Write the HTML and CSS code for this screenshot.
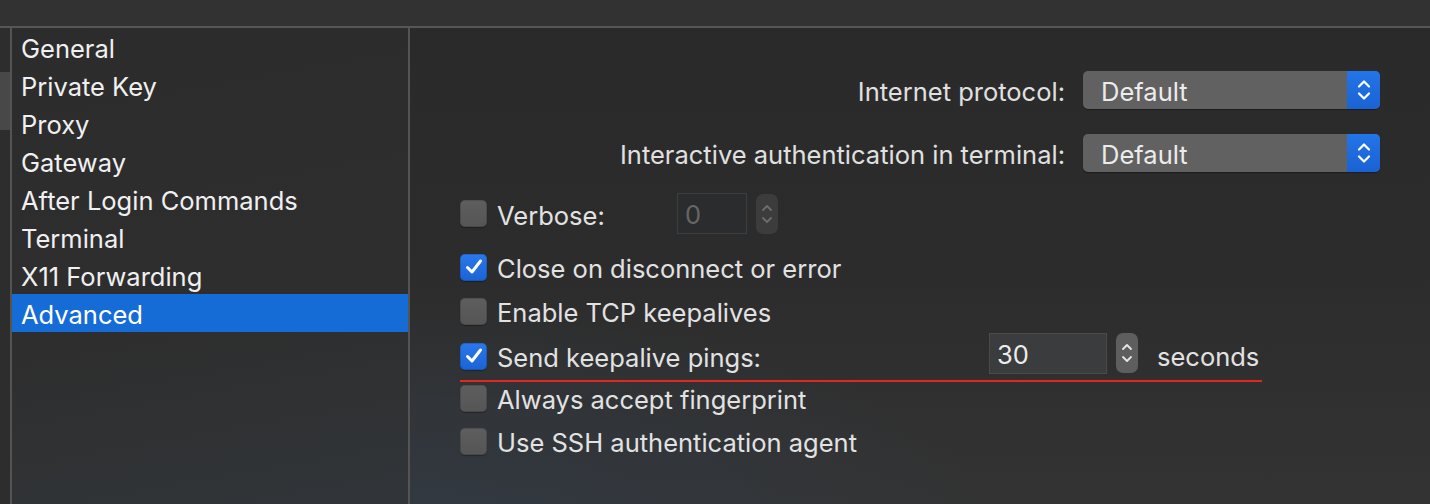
FILE: index.html
```html
<!DOCTYPE html>
<html>
<head>
<meta charset="utf-8">
<link rel="stylesheet" href="styles.css">
</head>
<body>
<div class="window">
  <div class="topbar"></div>
  <div class="content">
    <div class="gutter"><div class="thumb"></div></div>
    <ul class="sidebar">
      <li>General</li>
      <li>Private Key</li>
      <li>Proxy</li>
      <li>Gateway</li>
      <li>After Login Commands</li>
      <li>Terminal</li>
      <li>X11 Forwarding</li>
      <li class="selected">Advanced</li>
    </ul>
    <main class="main">
      <div class="popups">
        <label class="plabel">Internet protocol:</label>
        <div class="popup"><span class="pval">Default</span><span class="parrows"><svg width="16" height="24" viewBox="0 0 16 24"><path d="M3 8.5 L8 3.5 L13 8.5 M3 15.5 L8 20.5 L13 15.5" fill="none" stroke="#fff" stroke-width="2.2" stroke-linecap="round" stroke-linejoin="round"/></svg></span></div>
        <label class="plabel">Interactive authentication in terminal:</label>
        <div class="popup"><span class="pval">Default</span><span class="parrows"><svg width="16" height="24" viewBox="0 0 16 24"><path d="M3 8.5 L8 3.5 L13 8.5 M3 15.5 L8 20.5 L13 15.5" fill="none" stroke="#fff" stroke-width="2.2" stroke-linecap="round" stroke-linejoin="round"/></svg></span></div>
      </div>

      <div class="row verbose">
        <div class="check-label"><span class="cb"></span><span class="txt">Verbose:</span></div>
        <div class="field disabled">0</div>
        <div class="stepper disabled"><svg width="14" height="30" viewBox="0 0 14 30"><path d="M3 11 L7 7 L11 11 M3 19 L7 23 L11 19" fill="none" stroke="#6d6d6d" stroke-width="1.8" stroke-linecap="round" stroke-linejoin="round"/></svg></div>
      </div>

      <div class="row simple first"><span class="cb on"><svg width="22" height="22" viewBox="0 0 22 22"><path d="M4.5 11.5 L9 16 L17.5 5" fill="none" stroke="#fff" stroke-width="3" stroke-linecap="round" stroke-linejoin="round"/></svg></span><span class="txt">Close on disconnect or error</span></div>
      <div class="row simple"><span class="cb"></span><span class="txt">Enable TCP keepalives</span></div>

      <div class="row keepalive">
        <div class="check-label"><span class="cb on"><svg width="22" height="22" viewBox="0 0 22 22"><path d="M4.5 11.5 L9 16 L17.5 5" fill="none" stroke="#fff" stroke-width="3" stroke-linecap="round" stroke-linejoin="round"/></svg></span><span class="txt">Send keepalive pings:</span></div>
        <div class="field">30</div>
        <div class="stepper"><svg width="14" height="30" viewBox="0 0 14 30"><path d="M3 11 L7 7 L11 11 M3 19 L7 23 L11 19" fill="none" stroke="#e6e6e6" stroke-width="1.8" stroke-linecap="round" stroke-linejoin="round"/></svg></div>
        <span class="unit">seconds</span>
      </div>

      <div class="row simple after"><span class="cb"></span><span class="txt">Always accept fingerprint</span></div>
      <div class="row simple last"><span class="cb"></span><span class="txt">Use SSH authentication agent</span></div>
    </main>
  </div>
</div>
</body>
</html>
```

FILE: styles.css
```css
* { box-sizing: border-box; }
html, body { margin: 0; padding: 0; }
body {
  width: 1430px;
  height: 504px;
  overflow: hidden;
  background: #2b2b2b;
  font-family: "Inter", "Liberation Sans", sans-serif;
  color: #e2e2e2;
}
.window { display: flex; flex-direction: column; height: 504px; }
.topbar {
  height: 28px;
  background: #323232;
  border-bottom: 2px solid #565656;
  flex: none;
}
.content { display: flex; flex: 1; min-height: 0; }
.gutter { width: 10px; background: #2d2d2d; flex: none; }
.thumb { margin-top: 44px; height: 58px; background: #484848; }
.sidebar {
  list-style: none;
  margin: 0;
  padding: 0;
  width: 400px;
  flex: none;
  border-left: 2px solid #545454;
  border-right: 2px solid #545454;
  background: linear-gradient(170deg, #2c2c2c 0%, #2e2e2e 60%, #313539 100%);
}
.sidebar li {
  height: 38px;
  padding-top: 4px;
  line-height: 34px;
  padding-left: 9px;
  font-size: 25.5px;
  color: #f0f0f0;
}
.sidebar li.selected { background: #166cd6; color: #fff; }
.main {
  flex: 1;
  padding: 43px 50px 0 50px;
  background: radial-gradient(ellipse 600px 250px at 0% 110%, #323a44 0%, rgba(50,56,64,0) 100%),
              linear-gradient(180deg, #2a2a2a 0%, #2c2c2c 50%, #333333 100%);
}
.popups {
  display: grid;
  grid-template-columns: 1fr 297px;
  column-gap: 18px;
  row-gap: 25px;
  align-items: center;
}
.plabel { text-align: right; font-size: 25.5px; color: #e0e0e0; padding-top: 3px; }
.popup {
  height: 38px;
  border-radius: 5px;
  background: #616161;
  display: flex;
  align-items: center;
  justify-content: space-between;
  box-shadow: 0 1px 1px rgba(0,0,0,0.35);
  overflow: hidden;
}
.pval { padding-left: 18px; font-size: 25.5px; color: #ececec; padding-top: 2px; }
.parrows {
  width: 33px;
  height: 38px;
  background: linear-gradient(180deg, #2275e8, #1a62d4);
  display: flex;
  align-items: center;
  justify-content: center;
}
.row { display: flex; align-items: center; font-size: 25.5px; color: #e2e2e2; }
.txt { padding-top: 3px; }
.cb {
  width: 27px;
  height: 27px;
  border-radius: 5px;
  background: linear-gradient(180deg, #5e5e5e, #555555);
  box-shadow: inset 0 0 0 1px rgba(0,0,0,0.15), 0 1px 1px rgba(0,0,0,0.3);
  flex: none;
  display: flex;
  align-items: center;
  justify-content: center;
}
.cb.on { background: linear-gradient(180deg, #2a78ea, #1a63d6); }
.check-label { display: flex; align-items: center; gap: 10px; }
.simple { gap: 10px; height: 44px; }
.verbose { margin-top: 21px; height: 41px; }
.verbose .check-label { width: 217px; }
.first { margin-top: 11px; }
.field {
  height: 41px;
  border: 1px solid #4a4a4a;
  background: #3b3c3e;
  font-size: 25.5px;
  padding-left: 7px;
  padding-top: 2px;
  line-height: 37px;
  color: #ececec;
}
.field.disabled { width: 70px; background: #2b2c2d; border-color: #3e3e3e; color: #666; padding-left: 7px; }
.stepper {
  width: 22px;
  height: 40px;
  margin-left: 9px;
  border-radius: 7px;
  background: #5e5e5e;
  display: flex;
  align-items: center;
  justify-content: center;
}
.stepper.disabled { background: #3c3c3c; }
.keepalive {
  height: 49px;
  align-items: flex-start;
  width: 802px;
  border-bottom: 2px solid #e3261f;
}
.keepalive .check-label { width: 529px; height: 44px; padding-top: 2px; }
.keepalive .field { width: 118px; }
.unit { margin-left: 19px; line-height: 41px; padding-top: 3px; }
.after { height: 32px; }
.last { height: 32px; margin-top: 11px; }
```
